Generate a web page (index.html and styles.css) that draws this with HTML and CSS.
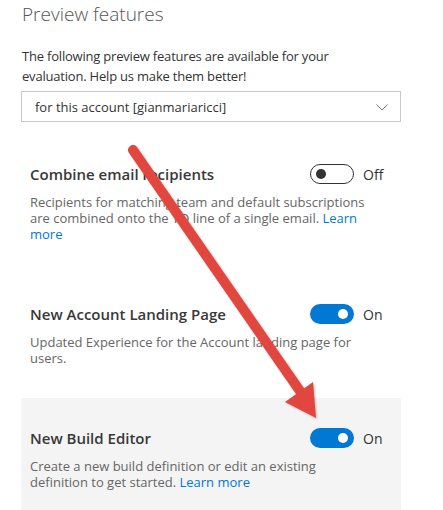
FILE: index.html
```html
<!DOCTYPE html>
<html>
<head>
<meta charset="utf-8">
<link rel="stylesheet" href="styles.css">
</head>
<body>
<div class="page">
  <h1 class="title">Preview features</h1>
  <p class="intro">The following preview features are available for your evaluation. Help us make them better!</p>
  <div class="select">
    <span>for this account [gianmariaricci]</span>
    <svg class="chev" width="12" height="7" viewBox="0 0 12 7"><path d="M0.5 0.5 L6 6 L11.5 0.5" fill="none" stroke="#777" stroke-width="1"/></svg>
  </div>

  <div class="features">
    <div class="feature">
      <div class="row">
        <div class="name">Combine email recipients</div>
        <div class="toggle-group"><span class="toggle off"><span class="knob"></span></span><span class="state">Off</span></div>
      </div>
      <p class="desc">Recipients for matching team and default subscriptions are combined onto the TO line of a single email. <a href="#">Learn more</a></p>
    </div>

    <div class="feature">
      <div class="row">
        <div class="name">New Account Landing Page</div>
        <div class="toggle-group"><span class="toggle on"><span class="knob"></span></span><span class="state">On</span></div>
      </div>
      <p class="desc">Updated Experience for the Account landing page for users.</p>
    </div>

    <div class="feature selected">
      <div class="row">
        <div class="name">New Build Editor</div>
        <div class="toggle-group"><span class="toggle on"><span class="knob"></span></span><span class="state">On</span></div>
      </div>
      <p class="desc">Create a new build definition or edit an existing definition to get started. <a href="#">Learn more</a></p>
    </div>
  </div>

  <svg class="arrow" width="443" height="510" viewBox="0 0 443 510">
    <line x1="133" y1="150" x2="302" y2="394" stroke="#e2473f" stroke-width="10" stroke-linecap="round"/>
    <polygon points="316,418 313,382 285,402" fill="#e2473f"/>
  </svg>
</div>
</body>
</html>
```

FILE: styles.css
```css
* { box-sizing: border-box; }
html, body { margin: 0; padding: 0; background: #fff; }
body { font-family: "Open Sans", "Noto Sans", sans-serif; color: #333; }
.page { position: relative; width: 443px; height: 510px; overflow: hidden; padding-left: 21px; }
.title {
  margin: 0;
  font-weight: 300;
  font-size: 19px;
  line-height: 28px;
  color: #555;
  padding-left: 1px;
  margin-top: 0;
}
.intro {
  margin: 18px 0 0 1px;
  font-size: 13px;
  letter-spacing: -0.2px;
  line-height: 20px;
  width: 370px;
  color: #333;
}
.select {
  margin-top: 5px;
  width: 380px;
  height: 31px;
  border: 1px solid #c8c8c8;
  display: flex;
  align-items: center;
  justify-content: space-between;
  padding: 0 12px 0 13px;
  font-size: 13px;
  color: #333;
}
.chev { margin-top: 1px; }
.features { margin-top: 12px; }
.feature {
  width: 380px;
  padding: 30px 9px 32px 9px;
}
.feature.selected { background: #f4f4f4; padding-bottom: 60px; }
.row { display: flex; align-items: center; height: 20px; }
.name { flex: 1; font-size: 15px; font-weight: 600; color: #383838; }
.toggle-group { width: 82px; display: flex; align-items: center; gap: 9px; }
.toggle {
  width: 44px;
  height: 20px;
  border-radius: 10px;
  position: relative;
  display: inline-block;
}
.toggle.off { border: 1px solid #333; background: #fff; }
.toggle.on { background: #0078d4; }
.knob { position: absolute; width: 10px; height: 10px; border-radius: 50%; top: 4px; }
.toggle.off .knob { background: #333; left: 5px; top: 4px; }
.toggle.on .knob { background: #fff; right: 6px; top: 5px; }
.state { font-size: 14px; color: #333; }
.desc {
  margin: 10px 0 0 0;
  font-size: 13px;
  line-height: 16px;
  color: #666;
  width: 345px;
}
.desc a { color: #0078d4; text-decoration: none; }
.arrow { position: absolute; left: 0; top: 0; pointer-events: none; filter: drop-shadow(1px 1px 1px rgba(0,0,0,0.25)); }
```
